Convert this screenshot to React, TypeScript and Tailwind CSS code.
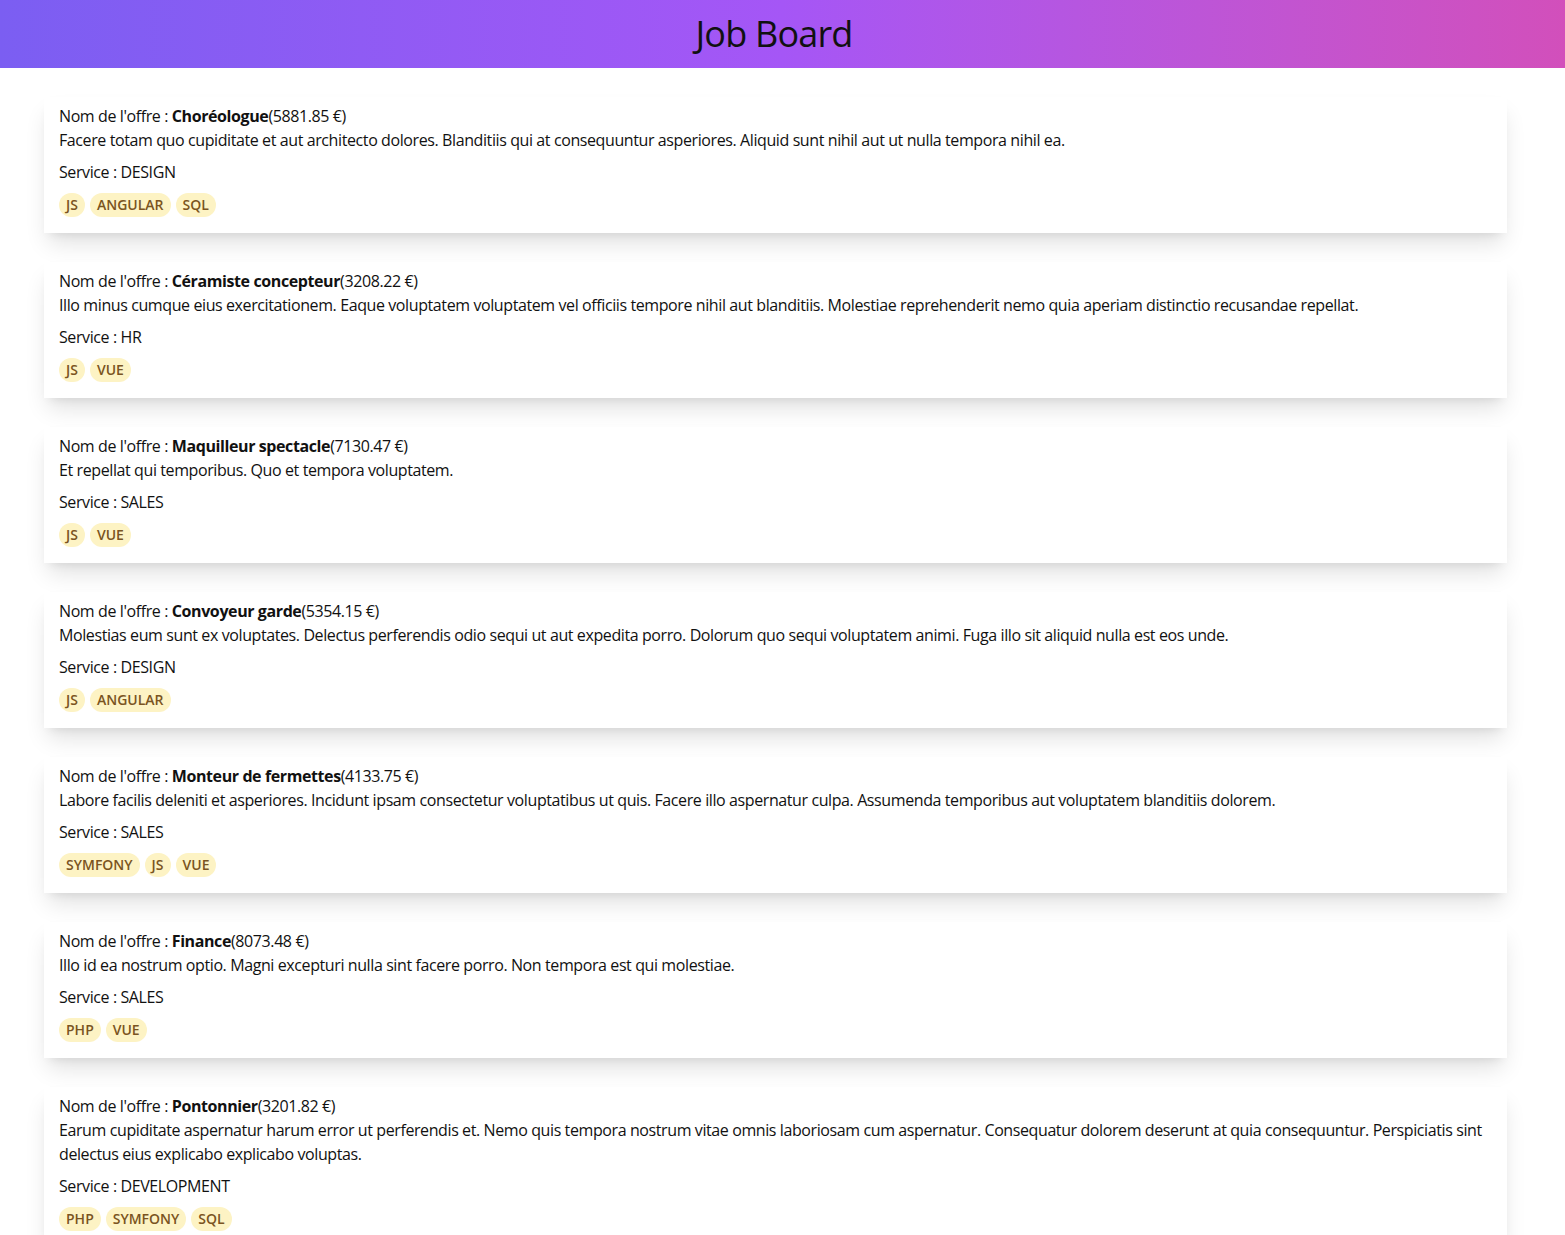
import React from "react";

type Job = { name: string; price: string; desc: string; service: string; tags: string[] };

const jobs: Job[] = [
  {
    name: "Choréologue",
    price: "5881.85",
    desc: "Facere totam quo cupiditate et aut architecto dolores. Blanditiis qui at consequuntur asperiores. Aliquid sunt nihil aut ut nulla tempora nihil ea.",
    service: "DESIGN",
    tags: ["JS", "ANGULAR", "SQL"],
  },
  {
    name: "Céramiste concepteur",
    price: "3208.22",
    desc: "Illo minus cumque eius exercitationem. Eaque voluptatem voluptatem vel officiis tempore nihil aut blanditiis. Molestiae reprehenderit nemo quia aperiam distinctio recusandae repellat.",
    service: "HR",
    tags: ["JS", "VUE"],
  },
  {
    name: "Maquilleur spectacle",
    price: "7130.47",
    desc: "Et repellat qui temporibus. Quo et tempora voluptatem.",
    service: "SALES",
    tags: ["JS", "VUE"],
  },
  {
    name: "Convoyeur garde",
    price: "5354.15",
    desc: "Molestias eum sunt ex voluptates. Delectus perferendis odio sequi ut aut expedita porro. Dolorum quo sequi voluptatem animi. Fuga illo sit aliquid nulla est eos unde.",
    service: "DESIGN",
    tags: ["JS", "ANGULAR"],
  },
  {
    name: "Monteur de fermettes",
    price: "4133.75",
    desc: "Labore facilis deleniti et asperiores. Incidunt ipsam consectetur voluptatibus ut quis. Facere illo aspernatur culpa. Assumenda temporibus aut voluptatem blanditiis dolorem.",
    service: "SALES",
    tags: ["SYMFONY", "JS", "VUE"],
  },
  {
    name: "Finance",
    price: "8073.48",
    desc: "Illo id ea nostrum optio. Magni excepturi nulla sint facere porro. Non tempora est qui molestiae.",
    service: "SALES",
    tags: ["PHP", "VUE"],
  },
  {
    name: "Pontonnier",
    price: "3201.82",
    desc: "Earum cupiditate aspernatur harum error ut perferendis et. Nemo quis tempora nostrum vitae omnis laboriosam cum aspernatur. Consequatur dolorem deserunt at quia consequuntur. Perspiciatis sint delectus eius explicabo explicabo voluptas.",
    service: "DEVELOPMENT",
    tags: ["PHP", "SYMFONY", "SQL"],
  },
];

export default function App() {
  return (
    <div
      className="min-h-screen bg-white text-[#111]"
      style={{ fontFamily: '"Open Sans", "Noto Sans", sans-serif' }}
    >
      <header className="h-[68px] flex items-center justify-center pr-[17px] bg-gradient-to-r from-[#7b5ef2] via-[#a556f6] to-[#d24fbb]">
        <h1 className="text-[36px] leading-none text-[#111] font-normal tracking-[-0.8px]">Job Board</h1>
      </header>
      <main className="pt-[29px] pl-[44px] w-[1507px] flex flex-col gap-[29px] pb-8">
        {jobs.map((j) => (
          <div
            key={j.name}
            className="bg-white px-[15px] pt-[7px] pb-[16px] shadow-[0_14px_22px_-4px_rgba(0,0,0,0.12),0_6px_10px_-6px_rgba(0,0,0,0.1)] text-[16px] leading-[24px]"
          >
            <div className="tracking-[-0.4px]">
              Nom de l'offre : <span className="font-bold">{j.name}</span>({j.price} €)
            </div>
            <div className="tracking-[-0.4px]">{j.desc}</div>
            <div className="mt-[8px] tracking-[-0.4px]">Service : {j.service}</div>
            <div className="mt-[9px] flex gap-[5px]">
              {j.tags.map((t) => (
                <span
                  key={t}
                  className="h-[24px] px-[7px] rounded-full bg-[#fdf3c4] text-[#7a5421] text-[14px] font-semibold leading-[24px]"
                >
                  {t}
                </span>
              ))}
            </div>
          </div>
        ))}
      </main>
    </div>
  );
}
